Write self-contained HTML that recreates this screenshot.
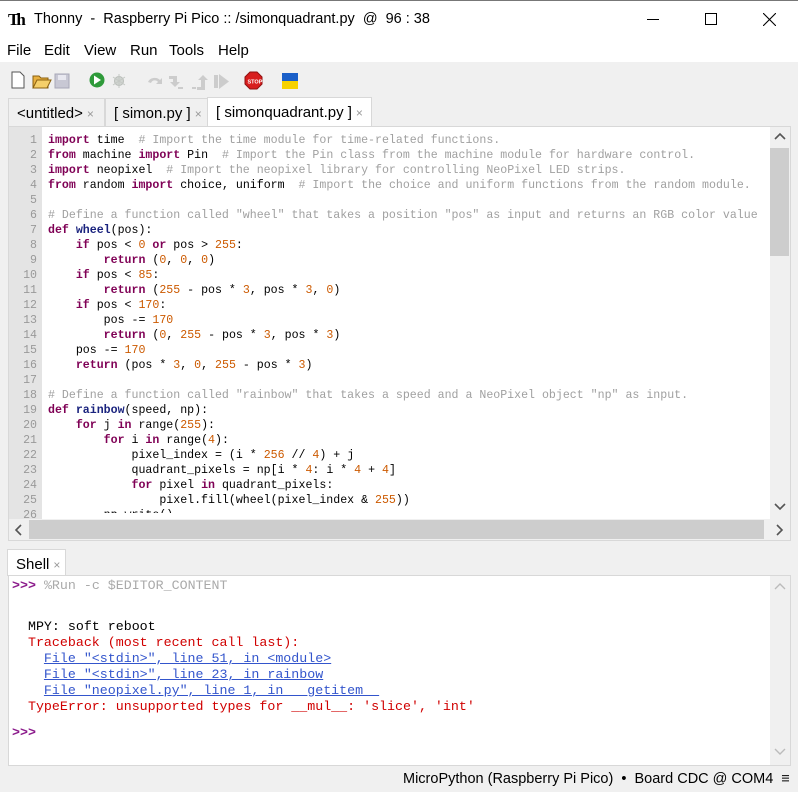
<!DOCTYPE html>
<html><head><meta charset="utf-8"><style>
*{margin:0;padding:0;box-sizing:border-box}
body{width:798px;height:792px;overflow:hidden;background:#f0f0f0;font-family:"Liberation Sans",sans-serif;position:relative}
.abs{position:absolute}
#title{left:0;top:0;width:798px;height:38px;background:#fff;border-top:1px solid #777}
#title .t{position:absolute;left:34px;top:10px;font-size:14.5px;color:#000;white-space:nowrap}
#menu{left:0;top:38px;width:798px;height:24px;background:#fff;font-size:15px}
#menu span{position:absolute;top:4px}
.tab{position:absolute;height:29px;border:1px solid #d8d8d8;border-bottom:none;background:#f0f0f0;font-size:15px;padding:6px 0 0 8px;color:#000;white-space:nowrap}
.tab i{font-style:normal;color:#999;font-size:12px;margin-left:4px}
#ed{left:8px;top:126px;width:783px;height:415px;background:#fff;border:1px solid #d8d8d8}
#gut{left:9px;top:127px;width:33px;height:392px;background:#e4e4e4}
pre{font-family:"Liberation Mono",monospace}
#ln{left:9px;top:133px;width:28px;text-align:right;font-size:11.6px;line-height:15px;color:#999}
#code{left:48px;top:133px;font-size:11.6px;line-height:15px;color:#000;height:380px;overflow:hidden;width:720px}
.k{color:#7f0055;font-weight:bold}
.n{color:#cc5a00}
.c{color:#a0a0a0}
.f{color:#1a237e;font-weight:bold}
#vs{left:770px;top:127px;width:20px;height:392px;background:#f0f0f0}
#hs{left:9px;top:519px;width:781px;height:21px;background:#f0f0f0}
#sh{left:8px;top:575px;width:783px;height:191px;background:#fff;border:1px solid #d8d8d8}
.sht{font-size:13.3px;line-height:16px;color:#000}
.r{color:#d00000}
.u{color:#3355cc;text-decoration:underline;text-decoration-color:#3355cc}
.p{color:#8b1a8b;font-weight:bold}
.g{color:#aaa}
#status{left:0;top:766px;width:798px;height:26px;font-size:14.5px;color:#000}
</style></head><body>
<div id="title" class="abs">
<div class="abs" style="left:8px;top:9px;font-family:'Liberation Serif',serif;font-weight:bold;font-size:17px;letter-spacing:-3px">Th</div>
<div class="t">Thonny &nbsp;- &nbsp;Raspberry Pi Pico :: /simonquadrant.py &nbsp;@ &nbsp;96 : 38</div>
<div class="abs" style="left:647px;top:18px;width:12px;height:1px;background:#000"></div>
<div class="abs" style="left:705px;top:12px;width:12px;height:12px;border:1px solid #000"></div>
<svg class="abs" style="left:763px;top:12px" width="13" height="13"><path d="M0 0L13 13M13 0L0 13" stroke="#000" stroke-width="1.1"/></svg>
</div>
<div id="menu" class="abs">
<span style="left:7px">File</span><span style="left:44px">Edit</span><span style="left:84px">View</span><span style="left:130px">Run</span><span style="left:169px">Tools</span><span style="left:218px">Help</span>
</div>
<svg class="abs" style="left:0;top:62px" width="310" height="35">
<path d="M12 10h8l4 4v12h-12z" fill="#fff" stroke="#555"/>
<path d="M33 14h6l2 2h7v10h-15z" fill="#e8b040" stroke="#8a6010"/><path d="M33 26l4-8h14l-4 8z" fill="#f5cf6a" stroke="#8a6010"/>
<rect x="55" y="12" width="14" height="14" fill="#c8c8d4" stroke="#a8a8b8"/><rect x="58" y="13" width="8" height="5" fill="#e8e8f0"/>
<circle cx="97" cy="18" r="7.5" fill="#2e9a3a"/><path d="M94 13.5l7 4.5-7 4.5z" fill="#fff"/>
<circle cx="119" cy="19" r="4.5" fill="#d0d4d0" stroke="#b8bcb8"/><path d="M113 15l12 8M113 23l12-8M119 12v14" stroke="#c4c8c4"/>
<path d="M148 20a7 6 0 0 1 12-2l2-2v6h-6l2-2a4 4 0 0 0-7 1z" fill="#ccc"/>
<path d="M169 14h8v6h3l-5 5-5-5h3v-3h-4z" fill="#ccc"/><rect x="178" y="25" width="5" height="2" fill="#ccc"/>
<path d="M197 25h4v-7h-3l5-5 5 5h-3v10h-8z" fill="#ccc"/><rect x="192" y="25" width="4" height="2" fill="#ccc"/>
<rect x="214" y="13" width="4" height="13" fill="#ccc"/><path d="M219 12l10 7.5-10 7.5z" fill="#ccc"/>
<path d="M250 10h7l5 5v7l-5 5h-7l-5-5v-7z" fill="#d81e1e" stroke="#901010"/><text x="247.5" y="21.5" font-size="5.5" fill="#fff" font-weight="bold" font-family="Liberation Sans">STOP</text>
<rect x="282" y="11" width="16" height="8" fill="#1a5fc8"/><rect x="282" y="19" width="16" height="8" fill="#f6d200"/>
</svg>
<div class="tab" style="left:8px;top:98px;width:97px">&lt;untitled&gt;<i>×</i></div>
<div class="tab" style="left:105px;top:98px;width:103px">[ simon.py ]<i>×</i></div>
<div class="tab" style="left:207px;top:97px;width:165px;height:30px;background:#fff">[ simonquadrant.py ]<i>×</i></div>
<div id="ed" class="abs"></div>
<div id="gut" class="abs"></div>
<pre id="ln" class="abs">1
2
3
4
5
6
7
8
9
10
11
12
13
14
15
16
17
18
19
20
21
22
23
24
25
26</pre>
<pre id="code" class="abs"><span class="k">import</span> time  <span class="c"># Import the time module for time-related functions.</span>
<span class="k">from</span> machine <span class="k">import</span> Pin  <span class="c"># Import the Pin class from the machine module for hardware control.</span>
<span class="k">import</span> neopixel  <span class="c"># Import the neopixel library for controlling NeoPixel LED strips.</span>
<span class="k">from</span> random <span class="k">import</span> choice, uniform  <span class="c"># Import the choice and uniform functions from the random module.</span>

<span class="c"># Define a function called "wheel" that takes a position "pos" as input and returns an RGB color value</span>
<span class="k">def</span> <span class="f">wheel</span>(pos):
    <span class="k">if</span> pos &lt; <span class="n">0</span> <span class="k">or</span> pos &gt; <span class="n">255</span>:
        <span class="k">return</span> (<span class="n">0</span>, <span class="n">0</span>, <span class="n">0</span>)
    <span class="k">if</span> pos &lt; <span class="n">85</span>:
        <span class="k">return</span> (<span class="n">255</span> - pos * <span class="n">3</span>, pos * <span class="n">3</span>, <span class="n">0</span>)
    <span class="k">if</span> pos &lt; <span class="n">170</span>:
        pos -= <span class="n">170</span>
        <span class="k">return</span> (<span class="n">0</span>, <span class="n">255</span> - pos * <span class="n">3</span>, pos * <span class="n">3</span>)
    pos -= <span class="n">170</span>
    <span class="k">return</span> (pos * <span class="n">3</span>, <span class="n">0</span>, <span class="n">255</span> - pos * <span class="n">3</span>)

<span class="c"># Define a function called "rainbow" that takes a speed and a NeoPixel object "np" as input.</span>
<span class="k">def</span> <span class="f">rainbow</span>(speed, np):
    <span class="k">for</span> j <span class="k">in</span> range(<span class="n">255</span>):
        <span class="k">for</span> i <span class="k">in</span> range(<span class="n">4</span>):
            pixel_index = (i * <span class="n">256</span> // <span class="n">4</span>) + j
            quadrant_pixels = np[i * <span class="n">4</span>: i * <span class="n">4</span> + <span class="n">4</span>]
            <span class="k">for</span> pixel <span class="k">in</span> quadrant_pixels:
                pixel.fill(wheel(pixel_index &amp; <span class="n">255</span>))
        np.write()</pre>
<div id="vs" class="abs"></div>
<svg class="abs" style="left:770px;top:130px" width="20" height="14"><path d="M5 9l5-5 5 5" fill="none" stroke="#555" stroke-width="1.6"/></svg>
<div class="abs" style="left:770px;top:148px;width:19px;height:108px;background:#cdcdcd"></div>
<svg class="abs" style="left:770px;top:500px" width="20" height="14"><path d="M5 4l5 5 5-5" fill="none" stroke="#555" stroke-width="1.6"/></svg>
<div id="hs" class="abs"></div>
<div class="abs" style="left:29px;top:520px;width:735px;height:19px;background:#cdcdcd"></div>
<svg class="abs" style="left:10px;top:522px" width="16" height="16"><path d="M11 3l-5 5 5 5" fill="none" stroke="#555" stroke-width="1.6"/></svg>
<svg class="abs" style="left:771px;top:522px" width="16" height="16"><path d="M6 3l5 5-5 5" fill="none" stroke="#555" stroke-width="1.6"/></svg>
<div class="tab" style="left:7px;top:549px;width:59px;height:27px;background:#fff">Shell<i>×</i></div>
<div id="sh" class="abs"></div>
<div class="abs" style="left:770px;top:576px;width:20px;height:189px;background:#f0f0f0"></div>
<svg class="abs" style="left:770px;top:580px" width="20" height="14"><path d="M5 9l5-5 5 5" fill="none" stroke="#bbb" stroke-width="1.4"/></svg>
<svg class="abs" style="left:770px;top:745px" width="20" height="14"><path d="M5 4l5 5 5-5" fill="none" stroke="#bbb" stroke-width="1.4"/></svg>
<pre class="abs sht" style="left:12px;top:578px"><span class="p">&gt;&gt;&gt;</span> <span class="g">%Run -c $EDITOR_CONTENT</span></pre>
<pre class="abs sht" style="left:12px;top:619px">  MPY: soft reboot
  <span class="r">Traceback (most recent call last):</span>
    <span class="u">File "&lt;stdin&gt;", line 51, in &lt;module&gt;</span>
    <span class="u">File "&lt;stdin&gt;", line 23, in rainbow</span>
    <span class="u">File "neopixel.py", line 1, in __getitem__</span>
  <span class="r">TypeError: unsupported types for __mul__: 'slice', 'int'</span></pre>
<pre class="abs sht p" style="left:12px;top:725px">&gt;&gt;&gt;</pre>
<div id="status" class="abs"><span class="abs" style="left:403px;top:5px;white-space:nowrap">MicroPython (Raspberry Pi Pico) &nbsp;• &nbsp;Board CDC @ COM4 &nbsp;≡</span></div>
</body></html>
